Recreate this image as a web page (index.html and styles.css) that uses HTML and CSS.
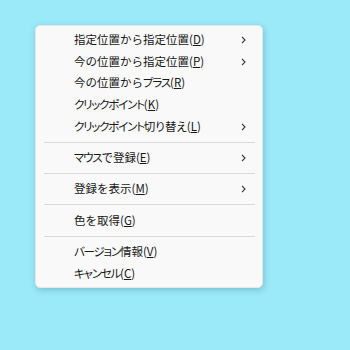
FILE: index.html
```html
<!DOCTYPE html>
<html lang="ja">
<head>
<meta charset="utf-8">
<link rel="stylesheet" href="styles.css">
</head>
<body>
<div class="menu">
  <div class="item"><span class="label">指定位置から指定位置(<u>D</u>)</span><svg class="chev" viewBox="0 0 5 8"><path d="M1 0.8 L4 4 L1 7.2" /></svg></div>
  <div class="item"><span class="label">今の位置から指定位置(<u>P</u>)</span><svg class="chev" viewBox="0 0 5 8"><path d="M1 0.8 L4 4 L1 7.2" /></svg></div>
  <div class="item"><span class="label">今の位置から<span class="kana">プラス</span>(<u>R</u>)</span></div>
  <div class="item"><span class="label"><span class="kana">クリックポイント</span>(<u>K</u>)</span></div>
  <div class="item"><span class="label"><span class="kana">クリックポイント</span><span class="tight">切り替え</span>(<u>L</u>)</span><svg class="chev" viewBox="0 0 5 8"><path d="M1 0.8 L4 4 L1 7.2" /></svg></div>
  <div class="sep"></div>
  <div class="item"><span class="label"><span class="kana">マウス</span>で登録(<u>E</u>)</span><svg class="chev" viewBox="0 0 5 8"><path d="M1 0.8 L4 4 L1 7.2" /></svg></div>
  <div class="sep"></div>
  <div class="item"><span class="label">登録を表示(<u>M</u>)</span><svg class="chev" viewBox="0 0 5 8"><path d="M1 0.8 L4 4 L1 7.2" /></svg></div>
  <div class="sep"></div>
  <div class="item"><span class="label">色を取得(<u>G</u>)</span></div>
  <div class="sep"></div>
  <div class="item"><span class="label"><span class="kana">バージョン</span>情報(<u>V</u>)</span></div>
  <div class="item"><span class="label"><span class="kana">キャンセル</span>(<u>C</u>)</span></div>
</div>
</body>
</html>
```
FILE: styles.css
```css
html, body {
  margin: 0;
  padding: 0;
}
body {
  width: 350px;
  height: 350px;
  background: #9aeafa;
  font-family: "Noto Sans CJK JP", "Noto Sans", sans-serif;
  font-size: 11.5px;
  color: #171717;
  padding: 25px 0 0 35px;
  box-sizing: border-box;
}
.menu {
  width: 228px;
  box-sizing: border-box;
  background: #f9f9f9;
  border: 1px solid #e6e6e6;
  border-radius: 5px;
  padding: 3px 0 3px 0;
  box-shadow: 1px 2px 6px rgba(0, 40, 60, 0.22);
  display: flex;
  flex-direction: column;
}
.item {
  height: 21.7px;
  display: flex;
  align-items: center;
  padding-left: 38px;
  padding-right: 16px;
}
.label {
  flex: 1;
  line-height: 1;
  white-space: nowrap;
}
.kana {
  font-feature-settings: "palt";
  letter-spacing: -1.2px;
}
.tight {
  font-feature-settings: "palt";
}
.label u {
  text-underline-offset: 1px;
}
.chev {
  width: 5px;
  height: 8px;
  fill: none;
  stroke: #333;
  stroke-width: 1.1;
}
.sep {
  height: 1px;
  background: #d9d9d9;
  margin: 4.3px 7px 4.3px 8px;
}
```
